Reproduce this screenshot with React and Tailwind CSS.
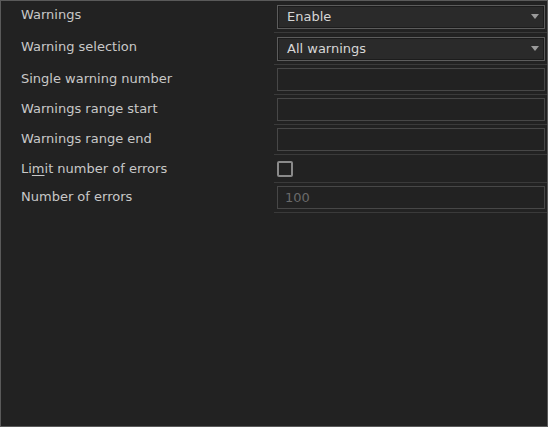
import React from "react";

const font = { fontFamily: "Tahoma, 'DejaVu Sans', 'Liberation Sans', sans-serif" };

const Arrow = () => (
  <svg width="8" height="5" viewBox="0 0 8 5" className="mr-[5px]">
    <path d="M0 0H8L4 5Z" fill="#9a9a9a" />
  </svg>
);

const Select = ({ value }) => (
  <div className="h-[24px] w-full flex items-center justify-between bg-[#2a2a2a] border border-[#5c5c5c] shadow-[inset_0_0_0_1px_#1c1c1c] pl-[9px]">
    <span className="text-[13px] text-[#d6d6d6]">{value}</span>
    <Arrow />
  </div>
);

const Input = ({ value }) => (
  <div className="h-[23px] w-full flex items-center border border-[#474747] bg-[#222222] pl-[7px]">
    <span className="text-[13px] text-[#6a6a6a]">{value}</span>
  </div>
);

const Checkbox = () => (
  <div className="w-[16px] h-[16px] border-2 border-[#8a8a8a] rounded-[2px] bg-[#222222]" />
);

const rows = [
  { label: "Warnings", h: "h-[32px]", ctrl: <Select value="Enable" /> },
  { label: "Warning selection", h: "h-[32px]", ctrl: <Select value="All warnings" /> },
  { label: "Single warning number", h: "h-[30px]", ctrl: <Input /> },
  { label: "Warnings range start", h: "h-[30px]", ctrl: <Input /> },
  { label: "Warnings range end", h: "h-[30px]", ctrl: <Input /> },
  {
    label: (
      <>
        Li<u className="underline-offset-2">m</u>it number of errors
      </>
    ),
    h: "h-[28px]",
    ctrl: <Checkbox />,
  },
  { label: "Number of errors", h: "h-[30px]", ctrl: <Input value="100" /> },
];

export default function App() {
  return (
    <div
      className="w-[548px] h-[427px] bg-[#222222] border border-[#5a5a5a] overflow-hidden"
      style={font}
    >
      {rows.map((row, i) => (
        <div key={i} className={`flex ${row.h}`}>
          <div className="w-[273px] shrink-0 pl-[20px] pt-[6px] text-[13px] text-[#c8c8c8] leading-[16px]">
            {row.label}
          </div>
          <div className="flex-1 flex items-center pl-[3px] pr-[2px] border-b border-[#3a3a3a]">
            {row.ctrl}
          </div>
        </div>
      ))}
    </div>
  );
}
